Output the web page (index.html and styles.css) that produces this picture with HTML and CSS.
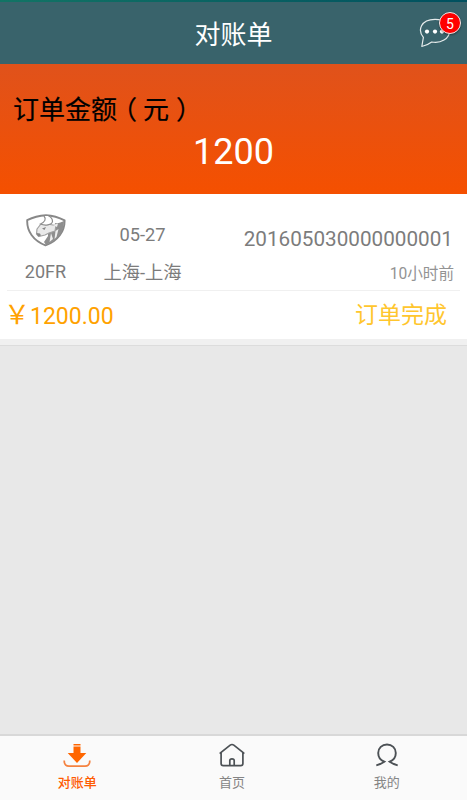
FILE: index.html
```html
<!DOCTYPE html>
<html lang="zh-CN">
<head>
  <meta charset="UTF-8">
  <meta name="viewport" content="width=device-width, initial-scale=1">
  <title>对账单</title>
  <link rel="stylesheet" href="styles.css">
</head>
<body>
<header class="topbar">
  <h1>对账单</h1>
  <a class="message" href="#">
    <svg width="32" height="32" viewBox="0 0 32 32">
      <path d="M2.8 28.5 L4.4 19.4 C-1.5 12.5 1.5 1.5 16 1.4 C26 1.4 30.6 6.5 30.6 12.4 C30.6 21 21.5 25.8 12.7 24 C9.5 26.4 6 27.9 2.8 28.5 Z" fill="none" stroke="#e6ecec" stroke-width="1.2" stroke-linejoin="round"/>
      <circle cx="8" cy="13.6" r="2.1" fill="#fff"/>
      <circle cx="16" cy="13.6" r="2.1" fill="#fff"/>
      <circle cx="23" cy="13.6" r="2.1" fill="#fff"/>
    </svg>
    <span class="badge">5</span>
  </a>
</header>

<section class="total">
  <p class="total-label">订单金额<span class="paren">（</span>元<span class="paren">）</span></p>
  <p class="total-value">1200</p>
</section>

<main>
  <article class="order">
    <div class="order-info">
      <div class="company">
        <svg width="40" height="33" viewBox="0 0 40 33">
          <path d="M20 1.2 C14 1.5 7 3.2 1.2 6.2 C.8 17 7 26.5 19.5 31.4 C32 27 38.8 17 38.6 6.4 C33 3.4 27 1.5 20 1.2 Z" fill="#fff" stroke="#888" stroke-width="1.9" stroke-linejoin="round"/>
          <path d="M29 9 C32 10 35 8 38 7 C38 17 33 25 20 31 L18 28 L22 22 L22 18 L28 16 Z" fill="#8e8e8e"/>
          <path d="M14.5 10.5 L24 10.5 L30 11.5 L29 17 L23 19 L19 21 L13 22.5 L10.5 20 L11 15 Z" fill="#e9e9e9" stroke="#a0a0a0" stroke-width="1.2" stroke-linejoin="round"/>
          <path d="M18 2 C20.5 5 19 8 14.5 10 C19 12 26 11 26.5 7.5 C26.5 5 25 3 22.5 2" fill="#fff" stroke="#8c8c8c" stroke-width="1.2"/>
          <path d="M27 11 L32 9.5 L31 13 Z M29.5 17 L32.5 15 L30.5 23 L28.5 25 Z M25 19 L27 25 L23.5 28 Z" fill="#eee"/>
          <path d="M10.5 19 L14 19.5 L15 21.5 L12 22.5 Z M16 14.5 L20 13 L18.5 16 Z" fill="#858585"/>
        </svg>
        <span>20FR</span>
      </div>
      <div class="route">
        <span>05-27</span>
        <span>上海-上海</span>
      </div>
      <div class="number">
        <span>201605030000000001</span>
        <time>10小时前</time>
      </div>
    </div>
    <div class="order-bottom">
      <span class="price"><span class="yen">￥</span>1200.00</span>
      <span class="status">订单完成</span>
    </div>
  </article>
</main>

<nav class="tabbar">
  <a class="active" href="#">
    <svg width="28" height="26" viewBox="0 0 28 26">
      <path d="M10.5 1 H17.5 V2.4 H10.5 Z M10.5 3.4 H17.5 V10 H23.3 L14 20 L4.7 10 H10.5 Z" fill="#ff6600"/>
      <path d="M1.2 17.5 C1.2 21.5 2.6 23.1 6 23.1 H22 C25.4 23.1 26.8 21.5 26.8 17.5" fill="none" stroke="#f58240" stroke-width="1.7"/>
    </svg>
    <span>对账单</span>
  </a>
  <a href="#">
    <svg width="28" height="26" viewBox="0 0 28 26">
      <path d="M1.7 10.7 L3.1 9.4 L12.2 2.2 Q14 .8 15.8 2.2 L24.9 9.4 L26.3 10.7 M3.1 9.4 V20.4 Q3.1 22.6 5.3 22.6 H22.7 Q24.9 22.6 24.9 20.4 V9.4 M11.8 22.6 V17.6 Q11.8 15.8 14 15.8 Q16.2 15.8 16.2 17.6 V22.6" fill="none" stroke="#4c5155" stroke-width="1.7"/>
    </svg>
    <span>首页</span>
  </a>
  <a href="#">
    <svg width="28" height="26" viewBox="0 0 28 26">
      <path d="M3.3 22.3 C6 21.6 8.5 20.7 11.3 18.7 C7.8 17.3 5.2 14.2 5.2 10 C5.2 5 9 1.5 14 1.5 C19 1.5 22.8 5 22.8 10 C22.8 14.2 20.2 17.3 16.7 18.7 C19.5 20.7 22 21.6 24.7 22.3" fill="none" stroke="#4c5155" stroke-width="1.9"/>
    </svg>
    <span>我的</span>
  </a>
</nav>
</body>
</html>
```
FILE: styles.css
```css
* {
  box-sizing: border-box;
}
body {
  margin: 0;
  height: 100vh;
  display: flex;
  flex-direction: column;
  overflow: hidden;
  background: #e8e8e8;
  color: #7c7c7c;
  font-family: Roboto, "Noto Sans CJK SC", sans-serif;
}
h1, p {
  margin: 0;
  font-weight: normal;
}
a {
  color: inherit;
  text-decoration: none;
}
svg {
  display: block;
}

.topbar {
  position: relative;
  flex: none;
  height: 64px;
  padding-top: 6px;
  display: flex;
  align-items: center;
  justify-content: center;
  color: #fff;
  background: linear-gradient(to right, #127465, #00505f) top / 100% 2px no-repeat, #39636b;
}
.topbar h1 {
  font-size: 26px;
  line-height: 38px;
}
.message {
  position: absolute;
  right: 16px;
  top: 18px;
}
.badge {
  position: absolute;
  left: 20px;
  top: -6px;
  width: 22px;
  height: 22px;
  border: 1.5px solid #f4e8e8;
  border-radius: 50%;
  background: #f00;
  font-size: 14px;
  line-height: 22px;
  text-align: center;
  box-shadow: 0 1px 2px rgba(0, 0, 0, .4);
}

.total {
  flex: none;
  height: 130px;
  padding: 25px 13px 0;
  background: linear-gradient(#e0521b, #f55000);
}
.total-label {
  color: #000;
  font-size: 26px;
  line-height: 38px;
  -webkit-text-stroke: .2px #000;
}
.paren {
  margin: 0 6px 0 7px;
  font-family: "Noto Sans CJK SC", sans-serif;
  font-feature-settings: "halt";
}
.total-value {
  color: #fff;
  font-size: 36px;
  line-height: 46px;
  text-align: center;
}

main {
  flex: 1;
}
.order {
  height: 151px;
  background: #fff;
  border-bottom: 6px solid #f0f0f0;
  box-shadow: 0 1px 0 #dcdcdc;
}
.order-info {
  display: flex;
  height: 97px;
  margin: 0 7px;
  border-bottom: 1px solid #f0f0f0;
  font-size: 18px;
}
.company,
.route {
  display: flex;
  flex-direction: column;
  align-items: center;
}
.company {
  width: 77px;
  padding-top: 20px;
}
.company span {
  margin-top: 13px;
  line-height: 24px;
}
.route {
  width: 117px;
  padding-top: 29px;
  font-size: 18.3px;
}
.route span {
  line-height: 24px;
}
.route span + span {
  margin-top: 14px;
}
.number {
  flex: 1;
  display: flex;
  flex-direction: column;
  align-items: flex-end;
  padding: 32px 7px 0 0;
  font-size: 20.7px;
}
.number span {
  line-height: 26px;
}
.number time {
  margin: 11px -1px 0 0;
  color: #939393;
  font-size: 15.6px;
  line-height: 22px;
}
.order-bottom {
  display: flex;
  justify-content: space-between;
  height: 48px;
  padding: 0 20px 0 4px;
  font-size: 23px;
  line-height: 50px;
}
.price {
  color: #ffa200;
  line-height: 52px;
}
.yen {
  font-size: 26px;
  line-height: 1;
}
.status {
  color: #ffc62e;
}

.tabbar {
  flex: none;
  display: flex;
  height: 66px;
  padding-right: 3px;
  border-top: 2px solid #d8d8d8;
  background: #fafafa;
}
.tabbar a {
  flex: 1;
  display: flex;
  flex-direction: column;
  align-items: center;
  padding-top: 7px;
  color: #858585;
  font-size: 13px;
  line-height: 20px;
}
.tabbar span {
  margin-top: 4px;
}
.tabbar .active {
  color: #ff5a00;
  font-weight: 500;
}
```
